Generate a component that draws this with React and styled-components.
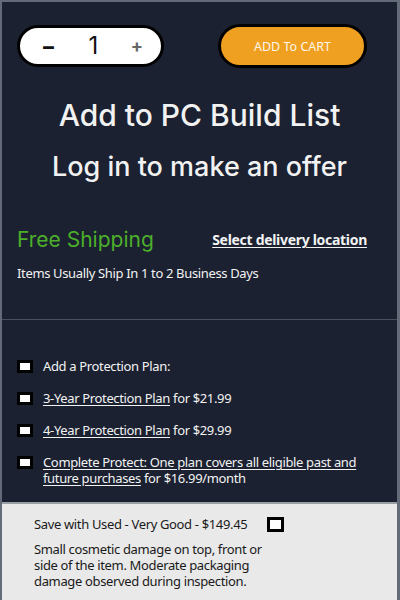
import React from "react";
import styled, { createGlobalStyle } from "styled-components";

const Global = createGlobalStyle`
  html, body { margin: 0; padding: 0; background: #1b2130; }
  * { box-sizing: border-box; }
`;

const Frame = styled.div`
  width: 400px;
  height: 600px;
  overflow: hidden;
  background: #1b2130;
  border: 2px solid #646b78;
  border-bottom: none;
  border-right-width: 3px;
  display: flex;
  flex-direction: column;
  font-family: "Noto Sans", "Open Sans", sans-serif;
  letter-spacing: -0.35px;
  color: #f2f2f2;
`;

const TopRow = styled.div`
  display: flex;
  justify-content: space-between;
  align-items: center;
  padding: 22px 30px 0 15px;
  letter-spacing: 0;
`;

const Stepper = styled.div`
  width: 147px;
  height: 42px;
  border: 3px solid #000;
  border-radius: 21px;
  background: #fff;
  display: flex;
  align-items: center;
  justify-content: space-between;
  padding: 0 18px 0 21px;
  color: #111;
`;

const StepBtn = styled.span`
  font-family: "Inter", sans-serif;
  font-size: ${(p) => p.$size}px;
  font-weight: ${(p) => p.$weight};
  color: ${(p) => p.$color};
  line-height: 1;
`;

const Qty = styled.span`
  font-family: "Inter", sans-serif;
  font-size: 24px;
  font-weight: 400;
  line-height: 1;
`;

const CartButton = styled.button`
  width: 149px;
  height: 44px;
  border: 3px solid #000;
  border-radius: 22px;
  background: #f0a020;
  color: #fff6e8;
  font-family: "Noto Sans", sans-serif;
  font-size: 12.5px;
  padding: 0;
  cursor: pointer;
`;

const Heading = styled.div`
  font-family: "Inter", sans-serif;
  font-size: ${(p) => p.$size}px;
  font-weight: 500;
  text-align: center;
  color: #f2f2f2;
  margin-top: ${(p) => p.$mt}px;
  line-height: 1.2;
  letter-spacing: 0;
`;

const ShipRow = styled.div`
  display: flex;
  justify-content: space-between;
  align-items: center;
  padding: 0 30px 0 15px;
  margin-top: 44px;
`;

const FreeShip = styled.span`
  font-family: "Inter", sans-serif;
  font-size: 21px;
  letter-spacing: 0;
  color: #4caf2a;
`;

const DeliveryLink = styled.a`
  font-family: "Noto Sans", sans-serif;
  font-size: 14px;
  font-weight: 700;
  letter-spacing: -0.3px;
  color: #f2f2f2;
  text-decoration: underline;
  text-underline-offset: 2px;
`;

const ShipNote = styled.div`
  font-size: 13px;
  line-height: 18px;
  padding-left: 15px;
  margin-top: 12px;
`;

const Divider = styled.hr`
  border: none;
  border-top: 1px solid #4a505c;
  margin: 37px 0 0;
`;

const PlanList = styled.div`
  display: flex;
  flex-direction: column;
  gap: 16px;
  padding: 38px 30px 0 15px;
`;

const PlanRow = styled.label`
  display: flex;
  align-items: flex-start;
  gap: 10px;
  font-size: 13px;
  line-height: 16px;
`;

const Box = styled.span`
  flex: none;
  width: ${(p) => p.$w || 16}px;
  height: ${(p) => p.$h || 13}px;
  border: 3px solid #000;
  background: #fff;
  margin-top: ${(p) => p.$mt ?? 2}px;
`;

const Link = styled.a`
  color: #f2f2f2;
  text-decoration: underline;
  text-underline-offset: 2px;
`;

const UsedPanel = styled.div`
  margin-top: auto;
  height: 98px;
  background: #e9e9e9;
  border-top: 2px solid #9a9ea5;
  color: #1a1a1a;
  padding: 12px 0 0 32px;
  font-size: 13px;
  line-height: 16px;
`;

const UsedTitle = styled.div`
  display: flex;
  align-items: center;
  gap: 20px;
`;

const UsedDesc = styled.p`
  margin: 9px 0 0;
  width: 240px;
`;

export default function App() {
  return (
    <>
      <Global />
      <Frame>
        <TopRow>
          <Stepper>
            <StepBtn $size={22} $weight={700} $color="#111">−</StepBtn>
            <Qty>1</Qty>
            <StepBtn $size={18} $weight={700} $color="#666">+</StepBtn>
          </Stepper>
          <CartButton>ADD To CART</CartButton>
        </TopRow>
        <Heading $size={30} $mt={29}>Add to PC Build List</Heading>
        <Heading $size={27} $mt={18}>Log in to make an offer</Heading>
        <ShipRow>
          <FreeShip>Free Shipping</FreeShip>
          <DeliveryLink href="#">Select delivery location</DeliveryLink>
        </ShipRow>
        <ShipNote>Items Usually Ship In 1 to 2 Business Days</ShipNote>
        <Divider />
        <PlanList>
          <PlanRow><Box />Add a Protection Plan:</PlanRow>
          <PlanRow><Box /><span><Link href="#">3-Year Protection Plan</Link> for $21.99</span></PlanRow>
          <PlanRow><Box /><span><Link href="#">4-Year Protection Plan</Link> for $29.99</span></PlanRow>
          <PlanRow><Box /><span><Link href="#">Complete Protect: One plan covers all eligible past and future purchases</Link> for $16.99/month</span></PlanRow>
        </PlanList>
        <UsedPanel>
          <UsedTitle>Save with Used - Very Good - $149.45<Box $w={17} $h={15} $mt={0} /></UsedTitle>
          <UsedDesc>Small cosmetic damage on top, front or side of the item. Moderate packaging damage observed during inspection.</UsedDesc>
        </UsedPanel>
      </Frame>
    </>
  );
}
